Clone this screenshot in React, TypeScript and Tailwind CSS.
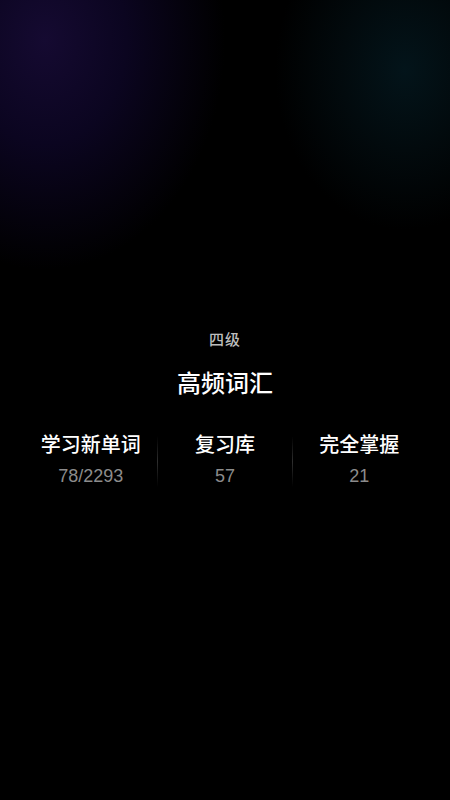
import React from "react";

const stats = [
  { label: "学习新单词", value: "78/2293" },
  { label: "复习库", value: "57" },
  { label: "完全掌握", value: "21" },
];

export default function App() {
  return (
    <div
      className="relative w-full h-[800px] overflow-hidden bg-black bg-[radial-gradient(ellipse_180px_230px_at_45px_40px,#150a31_0%,#0b0520_45%,transparent_100%),radial-gradient(ellipse_130px_160px_at_405px_70px,#03141a_0%,#020a0d_50%,transparent_100%)]"
      style={{ fontFamily: '"Noto Sans CJK SC", "Noto Sans", sans-serif' }}
    >
      <div className="flex flex-col items-center pt-[328px]">
        <div className="text-[15px] leading-[22px] tracking-[1px] text-[#bdbdbd] font-medium">四级</div>
        <div className="mt-[16px] text-[24px] leading-[32px] text-white font-medium">高频词汇</div>
        <div className="mt-[32px] w-full px-6 flex">
          {stats.map((s, i) => (
            <React.Fragment key={s.label}>
              {i > 0 && (
                <div className="w-px self-stretch mt-[6px] bg-gradient-to-b from-transparent via-[#2e2e2e] to-transparent" />
              )}
              <div className="flex-1 flex flex-col items-center">
                <div className="text-[20px] leading-[28px] text-white font-medium">{s.label}</div>
                <div
                  className="mt-[7px] text-[18px] leading-[22px] text-[#8c8c8c]"
                  style={{ fontFamily: '"Liberation Sans", "Noto Sans CJK SC", sans-serif' }}
                >
                  {s.value}
                </div>
              </div>
            </React.Fragment>
          ))}
        </div>
      </div>
    </div>
  );
}
